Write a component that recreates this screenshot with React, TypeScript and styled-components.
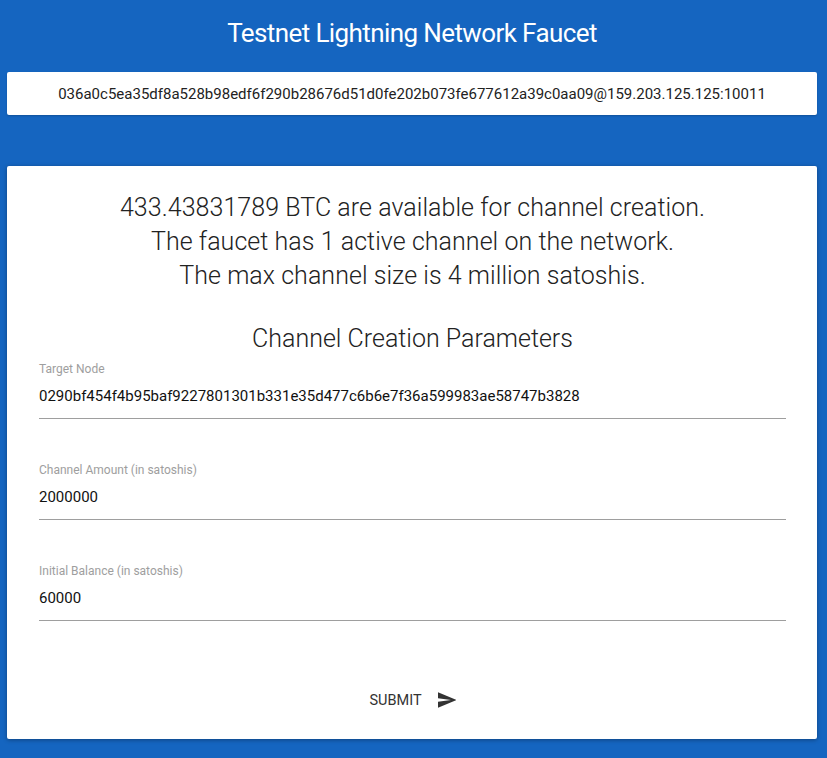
import React from "react";
import styled, { createGlobalStyle } from "styled-components";

const Global = createGlobalStyle`
  html, body {
    margin: 0;
    padding: 0;
    background: #1565c0;
    font-family: Roboto, "Noto Sans", sans-serif;
  }
  body { min-height: 758px; }
`;

const Page = styled.div`
  width: 810px;
  margin-left: 7px;
  padding-bottom: 19px;
`;

const Title = styled.h1`
  margin: 0;
  height: 72px;
  display: flex;
  align-items: center;
  justify-content: center;
  padding-bottom: 6px;
  box-sizing: border-box;
  color: #fff;
  font-size: 26px;
  font-weight: 400;
  letter-spacing: -0.6px;
`;

const NodeBox = styled.div`
  height: 43px;
  background: #fff;
  border-radius: 2px;
  box-shadow: 0 1px 2px rgba(0, 0, 0, 0.2);
  display: flex;
  align-items: center;
  justify-content: center;
  font-size: 15px;
  color: #222;
`;

const Card = styled.div`
  margin-top: 51px;
  background: #fff;
  border-radius: 2px;
  box-shadow: 0 1px 4px rgba(0, 0, 0, 0.35);
  padding: 25px 31px 0 32px;
  height: 573px;
  box-sizing: border-box;
  display: flex;
  flex-direction: column;
`;

const Stats = styled.div`
  text-align: center;
  font-size: 25px;
  font-weight: 300;
  line-height: 34px;
  letter-spacing: 0.05px;
  color: #222;
`;

const SectionTitle = styled.h2`
  margin: 29px 0 0;
  text-align: center;
  font-size: 25px;
  font-weight: 300;
  line-height: 34px;
  color: #222;
`;

const Field = styled.div<{ $first?: boolean }>`
  margin-top: ${(p) => (p.$first ? "6px" : "44px")};
  border-bottom: 1px solid #9e9e9e;
  padding-bottom: 13px;
`;

const Label = styled.div`
  font-size: 12px;
  line-height: 14px;
  color: #9e9e9e;
`;

const Value = styled.div`
  margin-top: 11px;
  font-size: 15px;
  line-height: 18px;
  color: #111;
`;

const Actions = styled.div`
  flex: 1;
  display: flex;
  align-items: center;
  justify-content: center;
  padding-top: 40px;
`;

const SubmitButton = styled.button`
  border: none;
  background: none;
  display: flex;
  align-items: center;
  gap: 16px;
  font-family: Roboto, "Noto Sans", sans-serif;
  font-size: 14.5px;
  color: #333;
  text-transform: uppercase;
  padding: 8px;
  cursor: pointer;
`;

const fields = [
  { label: "Target Node", value: "0290bf454f4b95baf9227801301b331e35d477c6b6e7f36a599983ae58747b3828" },
  { label: "Channel Amount (in satoshis)", value: "2000000" },
  { label: "Initial Balance (in satoshis)", value: "60000" },
];

export default function App() {
  return (
    <>
      <Global />
      <Page>
        <Title>Testnet Lightning Network Faucet</Title>
        <NodeBox>036a0c5ea35df8a528b98edf6f290b28676d51d0fe202b073fe677612a39c0aa09@159.203.125.125:10011</NodeBox>
        <Card>
          <Stats>
            433.43831789 BTC are available for channel creation.
            <br />
            The faucet has 1 active channel on the network.
            <br />
            The max channel size is 4 million satoshis.
          </Stats>
          <SectionTitle>Channel Creation Parameters</SectionTitle>
          {fields.map((f, i) => (
            <Field key={f.label} $first={i === 0}>
              <Label>{f.label}</Label>
              <Value>{f.value}</Value>
            </Field>
          ))}
          <Actions>
            <SubmitButton>
              Submit
              <svg width="18" height="16" viewBox="3 3 19 18" fill="#333">
                <path d="M2.01 21L23 12 2.01 3 2 10l15 2-15 2z" />
              </svg>
            </SubmitButton>
          </Actions>
        </Card>
      </Page>
    </>
  );
}
